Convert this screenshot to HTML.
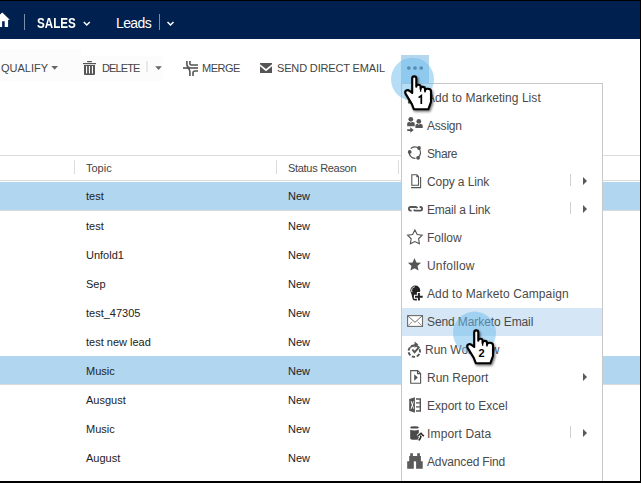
<!DOCTYPE html><html><head><meta charset="utf-8"><style>
*{margin:0;padding:0;box-sizing:border-box}
html,body{width:641px;height:483px;overflow:hidden;background:#fff;font-family:"Liberation Sans",sans-serif}
.a{position:absolute}
.t{position:absolute;white-space:nowrap;line-height:1}
.nav{color:#fff;font-size:14px}
.tb{color:#444;font-size:11px}
.gh{color:#444;font-size:11px}
.gr{color:#222;font-size:11px}
.mi{color:#4a4a4a;font-size:12px}
svg{position:absolute;left:0;top:0}
</style></head><body>

<div class="a" style="left:0;top:0;width:641px;height:1px;background:#000"></div>
<div class="a" style="left:0;top:1px;width:641px;height:38px;background:#002050"></div>
<div class="a" style="left:0;top:49px;width:81px;height:32px;background:#fcfcfc"></div>
<div class="a" style="left:81px;top:56px;width:81px;height:25px;background:#fcfcfc"></div>
<div class="t nav" style="left:37px;top:16px;font-weight:bold;transform:scaleX(0.83);transform-origin:0 0">SALES</div>
<div class="t nav" style="left:116px;top:16px;letter-spacing:-0.6px">Leads</div>
<div class="t tb" style="left:1px;top:63px">QUALIFY</div>
<div class="t tb" style="left:102px;top:63px;letter-spacing:-0.9px">DELETE</div>
<div class="t tb" style="left:202px;top:63px;letter-spacing:-0.5px">MERGE</div>
<div class="t tb" style="left:277px;top:63px;letter-spacing:-0.15px">SEND DIRECT EMAIL</div>
<div class="a" style="left:0;top:155px;width:641px;height:1px;background:#dcdcdc"></div>
<div class="a" style="left:0;top:180px;width:641px;height:1px;background:#dcdcdc"></div>
<div class="a" style="left:74px;top:160px;width:1px;height:14px;background:#dcdcdc"></div>
<div class="a" style="left:276px;top:160px;width:1px;height:14px;background:#dcdcdc"></div>
<div class="a" style="left:398px;top:160px;width:1px;height:14px;background:#dcdcdc"></div>
<div class="t gh" style="left:86px;top:163px">Topic</div>
<div class="t gh" style="left:288px;top:163px;letter-spacing:-0.3px">Status Reason</div>
<div class="a" style="left:0;top:182px;width:641px;height:28px;background:#b1d6f0"></div>
<div class="a" style="left:0;top:210px;width:641px;height:1px;background:#dadada"></div>
<div class="t gr" style="left:86px;top:191px">test</div>
<div class="t gr" style="left:288px;top:191px">New</div>
<div class="t gr" style="left:86px;top:221px">test</div>
<div class="t gr" style="left:288px;top:221px">New</div>
<div class="t gr" style="left:86px;top:250px">Unfold1</div>
<div class="t gr" style="left:288px;top:250px">New</div>
<div class="t gr" style="left:86px;top:279px">Sep</div>
<div class="t gr" style="left:288px;top:279px">New</div>
<div class="t gr" style="left:86px;top:308px">test_47305</div>
<div class="t gr" style="left:288px;top:308px">New</div>
<div class="t gr" style="left:86px;top:337px">test new lead</div>
<div class="t gr" style="left:288px;top:337px">New</div>
<div class="a" style="left:0;top:356px;width:641px;height:28px;background:#b1d6f0"></div>
<div class="a" style="left:0;top:384px;width:641px;height:1px;background:#dadada"></div>
<div class="t gr" style="left:86px;top:366px">Music</div>
<div class="t gr" style="left:288px;top:366px">New</div>
<div class="t gr" style="left:86px;top:395px">Ausgust</div>
<div class="t gr" style="left:288px;top:395px">New</div>
<div class="t gr" style="left:86px;top:424px">Music</div>
<div class="t gr" style="left:288px;top:424px">New</div>
<div class="t gr" style="left:86px;top:453px">August</div>
<div class="t gr" style="left:288px;top:453px">New</div>
<div class="a" style="left:401px;top:55px;width:28px;height:28px;background:#b3d7ef"></div>
<div class="a" style="left:401px;top:83px;width:202px;height:400px;background:#fff;border:1px solid #c8c8c8"></div>
<div class="a" style="left:402px;top:308px;width:200px;height:28px;background:#d5e7f6"></div>
<div class="t mi" style="left:427px;top:92px;letter-spacing:0.05px">Add to Marketing List</div>
<div class="t mi" style="left:427px;top:120px;letter-spacing:-0.2px">Assign</div>
<div class="t mi" style="left:427px;top:148px;letter-spacing:-0.4px">Share</div>
<div class="t mi" style="left:427px;top:176px;letter-spacing:-0.1px">Copy a Link</div>
<div class="a" style="left:570px;top:174px;width:1px;height:12px;background:#d0d0d0"></div>
<div class="a" style="left:583px;top:177px;width:0;height:0;border-left:4px solid #585858;border-top:4px solid transparent;border-bottom:4px solid transparent"></div>
<div class="t mi" style="left:427px;top:204px;letter-spacing:-0.2px">Email a Link</div>
<div class="a" style="left:570px;top:202px;width:1px;height:12px;background:#d0d0d0"></div>
<div class="a" style="left:583px;top:205px;width:0;height:0;border-left:4px solid #585858;border-top:4px solid transparent;border-bottom:4px solid transparent"></div>
<div class="t mi" style="left:427px;top:232px;letter-spacing:0px">Follow</div>
<div class="t mi" style="left:427px;top:260px;letter-spacing:0.2px">Unfollow</div>
<div class="t mi" style="left:427px;top:288px;letter-spacing:0.1px">Add to Marketo Campaign</div>
<div class="t mi" style="left:427px;top:316px;letter-spacing:-0.1px">Send Marketo Email</div>
<div class="t mi" style="left:425px;top:344px;letter-spacing:0px">Run Workflow</div>
<div class="t mi" style="left:427px;top:372px;letter-spacing:0px">Run Report</div>
<div class="a" style="left:583px;top:373px;width:0;height:0;border-left:4px solid #585858;border-top:4px solid transparent;border-bottom:4px solid transparent"></div>
<div class="t mi" style="left:427px;top:400px;letter-spacing:0px">Export to Excel</div>
<div class="t mi" style="left:427px;top:428px;letter-spacing:0.15px">Import Data</div>
<div class="a" style="left:570px;top:426px;width:1px;height:12px;background:#d0d0d0"></div>
<div class="a" style="left:583px;top:429px;width:0;height:0;border-left:4px solid #585858;border-top:4px solid transparent;border-bottom:4px solid transparent"></div>
<div class="t mi" style="left:427px;top:456px;letter-spacing:-0.15px">Advanced Find</div>
<svg width="641" height="483" viewBox="0 0 641 483"><path d="M-6,19.6 L2.3,12.6 L9.8,19.8 H8.1 V27 H4.7 V21.2 H2.1 V27 H-6 Z" fill="#fff"/><rect x="24" y="14" width="1" height="16" fill="#7f8fab"/><rect x="159" y="14" width="1" height="16" fill="#7f8fab"/><path d="M83.8,22 L86.8,25 L89.8,22" fill="none" stroke="#fff" stroke-width="1.5"/><path d="M167.5,22 L170.5,25 L173.5,22" fill="none" stroke="#fff" stroke-width="1.5"/><path d="M51.3,66 H58 L54.65,69.8 Z" fill="#666"/><path d="M155.3,66.3 H161.8 L158.55,70 Z" fill="#666"/><rect x="146.5" y="61" width="1" height="11" fill="#d4d4d4"/><rect x="87" y="61" width="5" height="1.2" rx="0.6" fill="#555"/><rect x="83" y="63" width="13" height="1.2" fill="#555"/><path d="M84,65 H95 V74 Q95,75 94,75 H85 Q84,75 84,74 Z M86,66 V73.5 H87.1 V66 Z M88.9,66 V73.5 H90 V66 Z M91.9,66 V73.5 H93 V66 Z" fill="#555" fill-rule="evenodd"/><g fill="none" stroke="#555" stroke-width="1.6"><path d="M183,68 H198"/><path d="M186.9,61 V64.6 Q186.9,67 189.5,68"/><path d="M189.9,61 V63.8 Q189.9,65 191.2,65 H198"/><path d="M189.9,76 V71.5 Q189.9,69 187.6,68"/><path d="M193,76 V73 Q193,71 195,71 H198"/></g><path d="M260,63 H272 V64.2 L266,69 L260,64.2 Z" fill="#555"/><path d="M260,66.2 L266,71.2 L272,66.2 V73 H260 Z" fill="#555"/><circle cx="408.8" cy="68" r="1.85" fill="#3f5f75"/><circle cx="415" cy="68" r="1.85" fill="#3f5f75"/><circle cx="421.2" cy="68" r="1.85" fill="#3f5f75"/><rect x="408" y="100.5" width="3" height="3" fill="#555"/><g fill="#555"><circle cx="410.8" cy="119.3" r="2.4"/><path d="M407.2,126.3 V123.5 Q407.2,122 409,122 H409.9 L410.8,123 L411.7,122 H413 Q414.7,122 414.7,123.5 V126.3 Z"/><circle cx="418.8" cy="121.4" r="2.4"/><path d="M415.4,128.1 V125.5 Q415.4,124 417,124 H417.9 L418.8,125 L419.7,124 H421 Q422.7,124 422.7,125.5 V128.1 Z"/><path d="M407.2,129.3 H410.3 V127.3 L413.7,130.1 L410.3,132.7 V130.9 H407.2 Z"/></g><g fill="none" stroke="#555" stroke-width="1.2"><path d="M410.73,148.71 A5.7,5.7 0 0 1 418.71,148.36"/><path d="M418.71,148.36 A5.7,5.7 0 0 1 417.84,157.49"/><path d="M415.50,158.27 A5.7,5.7 0 0 1 409.23,152.00"/></g><g fill="#555"><circle cx="419" cy="148" r="1.9"/><circle cx="409.7" cy="151.9" r="1.9"/><circle cx="418.1" cy="157.8" r="1.9"/></g><g fill="none" stroke="#555" stroke-width="1.1"><path d="M411.8,174.8 H416.8 L418.5,176.5 V185.3 H411.8 Z"/><path d="M420.6,177 V187.6 H411"/></g><path d="M416.3,174.8 V177.3 H418.6 Z" fill="#555"/><g fill="none" stroke="#555" stroke-width="1.8" stroke-linecap="butt"><path d="M411.6,210.6 H410.6 Q408.9,210.6 408.9,208.8 Q408.9,207 410.6,207 H415.6 Q416.8,207 417.3,208.2"/><path d="M419.6,207 H420.4 Q422.1,207 422.1,208.8 Q422.1,210.6 420.4,210.6 H415.4 Q414.3,210.6 413.9,209.6"/></g><path d="M414.90,229.90 L417.19,234.44 L422.22,235.22 L418.61,238.81 L419.43,243.83 L414.90,241.50 L410.37,243.83 L411.19,238.81 L407.58,235.22 L412.61,234.44Z" fill="none" stroke="#555" stroke-width="1.1" stroke-linejoin="miter"/><path d="M414.50,258.10 L416.38,262.41 L421.06,262.87 L417.54,265.99 L418.56,270.58 L414.50,268.20 L410.44,270.58 L411.46,265.99 L407.94,262.87 L412.62,262.41Z" fill="#555"/><g><circle cx="415.3" cy="290.4" r="4.9" fill="#222"/><path d="M411,292 L412.5,298.6 Q412.9,300.5 415,300.5 H417.5 V294 Z" fill="#222"/><path d="M412.10,292.25 A3.7,3.7 0 0 1 414.79,286.74" fill="none" stroke="#fff" stroke-width="0.9"/><path d="M413.9,294.8 H416.9 V292 H420.9 V294.8 H423.7 V298.8 H420.9 V301.6 H416.9 V298.8 H413.9 Z" fill="#fff"/><path d="M415,295.8 H417.9 V293 H419.9 V295.8 H422.7 V297.8 H419.9 V300.6 H417.9 V297.8 H415 Z" fill="#222"/></g><g fill="none" stroke="#6a6a6a"><rect x="407.6" y="315.6" width="14.9" height="10.8" fill="#fff" stroke-width="1.1"/><path d="M408,316 L415,322.3 L422,316" stroke-width="1"/><path d="M412.2,321.8 L408.3,325.6 M417.8,321.8 L421.7,325.6" stroke-width="0.7"/></g><g fill="none" stroke="#555" stroke-width="1.9"><circle cx="414.3" cy="351.2" r="5.7" stroke-dasharray="3.4 1.65" transform="rotate(-75 414.3 351.2)"/><path d="M412.3,349.5 L414.6,352.2 L419.3,346.9"/></g><path d="M409.6,347.2 Q411,344.6 414.6,344.4 V341.4 L418.3,344.5 L414.6,347.9 V345.9 Q412.4,346 410.9,348 Z" fill="#555"/><g fill="none" stroke="#555" stroke-width="1.1"><path d="M410.7,370.6 H417.7 L420.6,373.5 V383.3 H410.7 Z"/><path d="M417.5,370.6 V373.6 H420.6"/></g><path d="M414.2,374.2 L417.9,377.5 L414.2,380.8 Z" fill="#555"/><path d="M409.2,399 L414.9,397.2 V412.7 L409.2,410.7 Z M410.6,401.3 L411.9,405 L410.6,408.8 H411.6 L412.5,406.2 L413.4,408.8 H414 L412.9,405 L414,401.3 H413.3 L412.5,403.8 L411.6,401.3 Z" fill="#555" fill-rule="evenodd"/><path d="M416,398.2 H421 V411.7 H416 V410.2 H419.6 V407.4 H416 V406.2 H419.6 V403.6 H416 V402.3 H419.6 V399.7 H416 Z" fill="#555"/><g fill="#4a4a4a"><ellipse cx="414.5" cy="427.4" rx="4.3" ry="1.2"/><path d="M410.2,429.8 Q414.5,431 418.8,429.8 V438.5 Q418.8,439.8 414.5,439.8 Q410.2,439.8 410.2,438.5 Z"/></g><path d="M418.8,440.3 Q421.2,439 421.1,434.8" fill="none" stroke="#fff" stroke-width="3.2"/><path d="M418.6,440.2 Q421,439 420.9,434.6" fill="none" stroke="#222" stroke-width="1.6"/><path d="M417.6,436 L421,433 L424,436.2" fill="none" stroke="#fff" stroke-width="3"/><path d="M417.8,436 L421,433.3 L423.8,436.2" fill="none" stroke="#222" stroke-width="1.5"/><path d="M410.2,453.2 H412.9 V455.9 H417.2 V453.2 H419.9 V455.9 H420.9 V461.2 H422.7 V468.7 H416.1 V461.5 Q415,460.9 413.8,461.5 V468.7 H407.2 V461.2 H409.2 V455.9 H410.2 Z" fill="#5a5a5a"/></svg>
<svg width="641" height="483" viewBox="0 0 641 483"><defs><filter id="sh" x="-50%" y="-50%" width="200%" height="200%"><feDropShadow dx="1.2" dy="1.5" stdDeviation="1.3" flood-color="#000" flood-opacity="0.55"/></filter></defs><circle cx="412.5" cy="79.2" r="21.5" fill="#6cbcec" fill-opacity="0.5"/><circle cx="474.5" cy="333" r="21.5" fill="#6cbcec" fill-opacity="0.5"/><g transform="translate(0,0)"><g filter="url(#sh)"><path d="M412.2,92 V78.4 Q412.2,76.4 414.25,76.4 Q416.3,76.4 416.3,78.4 V86.8 Q416.3,84.8 418.45,84.8 Q420.6,84.8 420.6,86.8 V88.9 Q420.6,86.9 422.8,86.9 Q425,86.9 425,88.9 V90.7 Q425,88.7 427.9,88.7 Q431,88.7 431,91.4 V101.8 L428.3,109.3 H413.9 L412,104.3 L405.5,93.6 Q404.6,91.3 406.3,90.4 Q408.1,89.7 409.9,91.2 L412.2,93 Z" fill="#fff" stroke="#000" stroke-width="2.1" stroke-linejoin="round"/></g><path d="M420.6,87.5 V91.8 M425,89.5 V92.6" stroke="#000" stroke-width="1.3"/><path d="M418.6,97.6 L421.3,95.6 V104" fill="none" stroke="#000" stroke-width="1.7"/></g><g transform="translate(62,254)"><g filter="url(#sh)"><path d="M412.2,92 V78.4 Q412.2,76.4 414.25,76.4 Q416.3,76.4 416.3,78.4 V86.8 Q416.3,84.8 418.45,84.8 Q420.6,84.8 420.6,86.8 V88.9 Q420.6,86.9 422.8,86.9 Q425,86.9 425,88.9 V90.7 Q425,88.7 427.9,88.7 Q431,88.7 431,91.4 V101.8 L428.3,109.3 H413.9 L412,104.3 L405.5,93.6 Q404.6,91.3 406.3,90.4 Q408.1,89.7 409.9,91.2 L412.2,93 Z" fill="#fff" stroke="#000" stroke-width="2.1" stroke-linejoin="round"/></g><path d="M420.6,87.5 V91.8 M425,89.5 V92.6" stroke="#000" stroke-width="1.3"/><text x="416.6" y="103.4" style="font-family:Liberation Sans;font-weight:bold;font-size:11px" fill="#000">2</text></g></svg>
<div class="a" style="left:640px;top:0;width:1px;height:483px;background:#000"></div>
<div class="a" style="left:0;top:481px;width:641px;height:2px;background:#000"></div>
</body></html>
